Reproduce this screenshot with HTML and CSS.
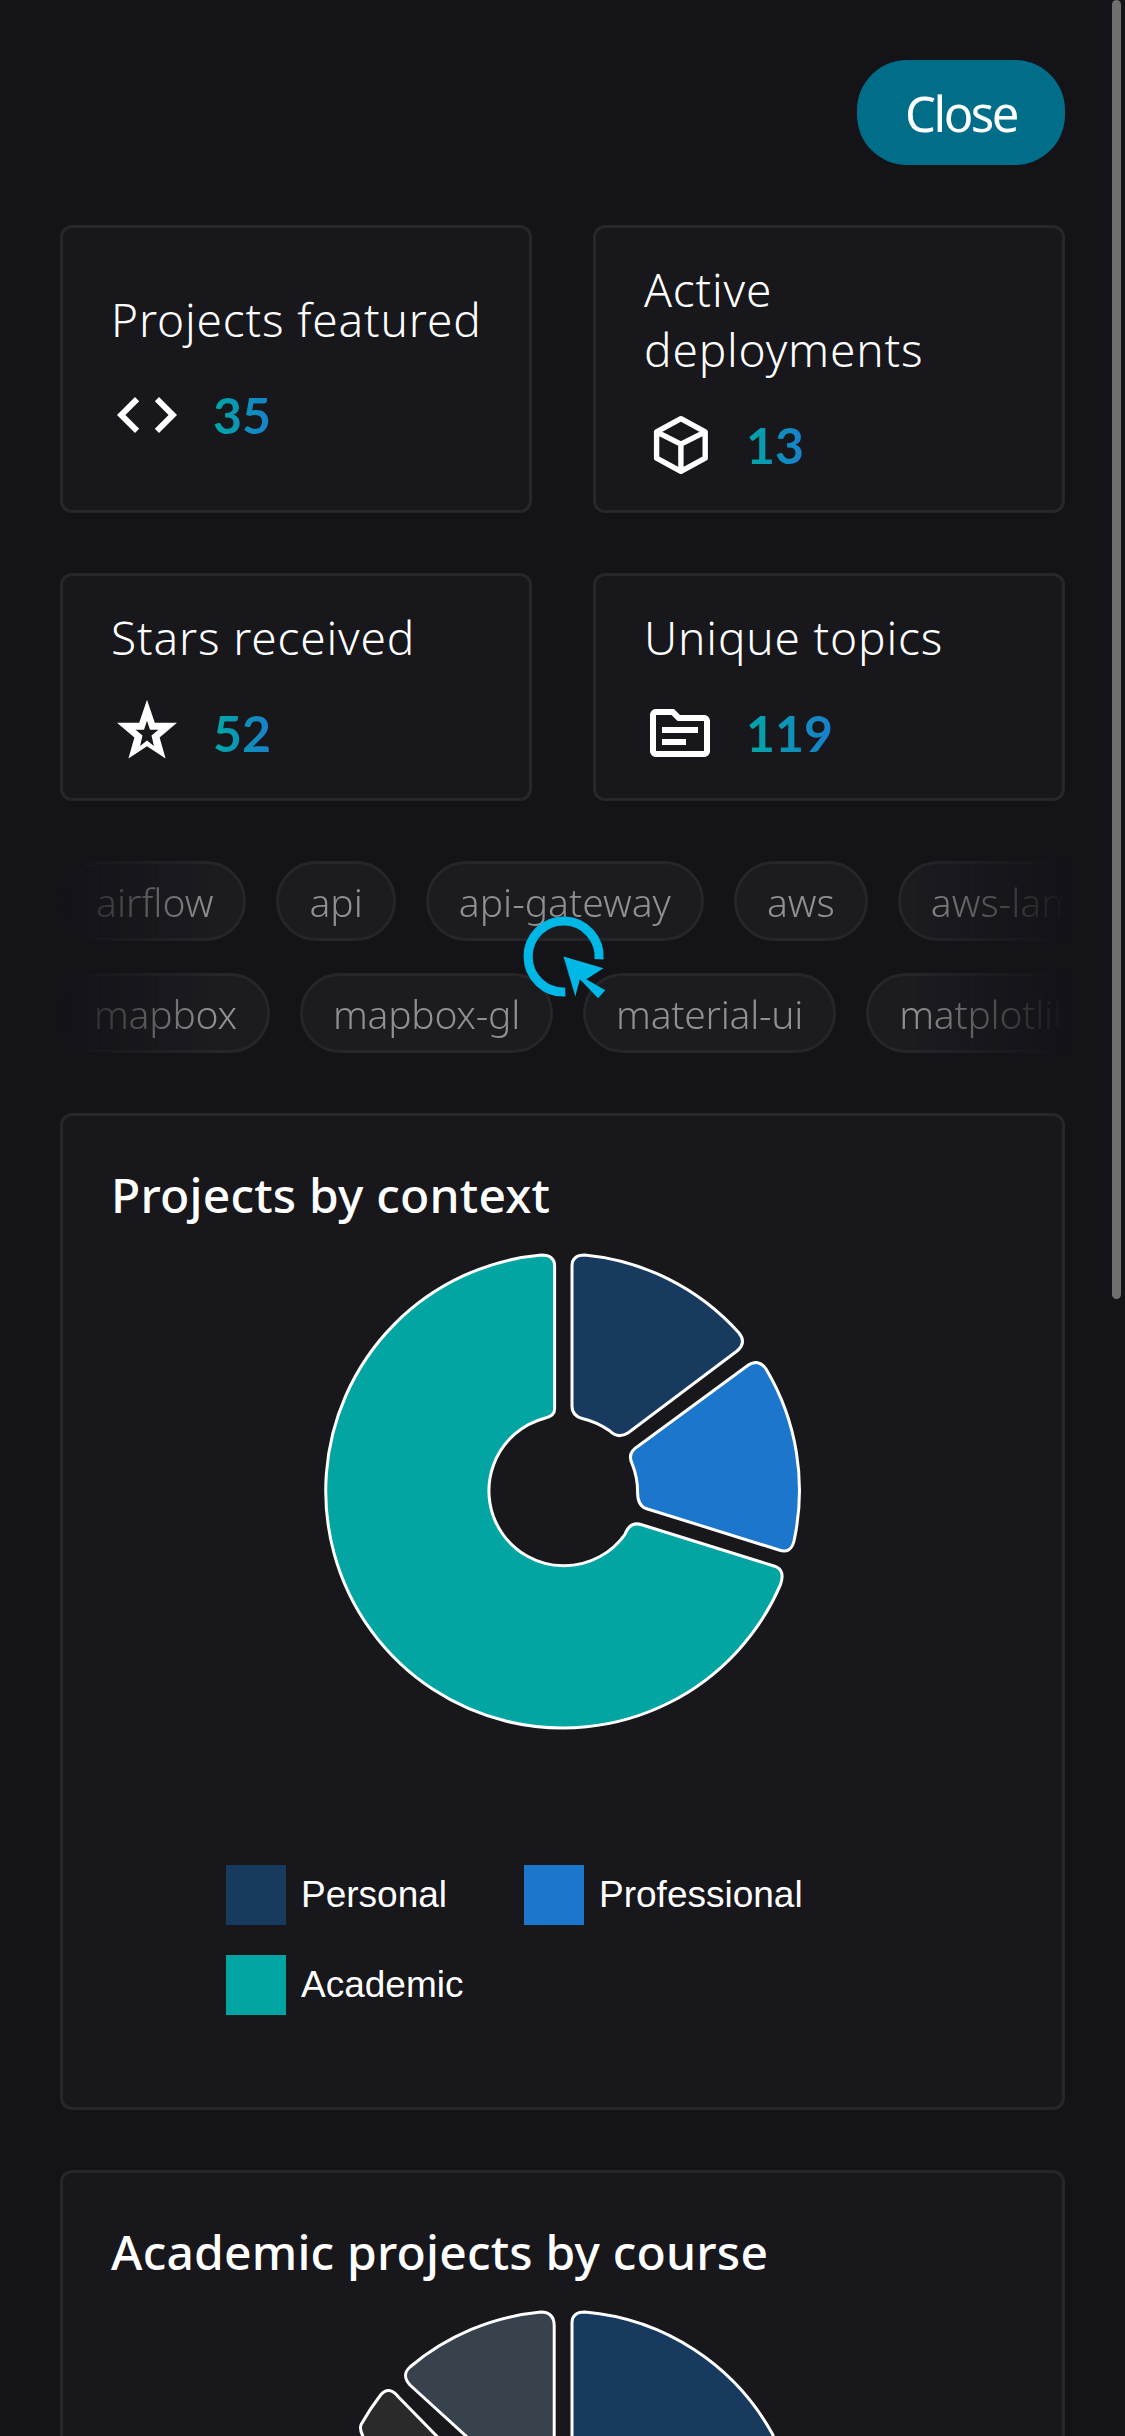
FILE: index.html
```html
<!DOCTYPE html>
<html lang="en">
<head>
    <meta charset="UTF-8">
    <meta name="viewport" content="width=device-width, initial-scale=1.0">
    <title>Portfolio stats</title>
    <link rel="stylesheet" href="styles.css">
</head>
<body>
    <div class="page">
        <div class="top-bar">
            <button class="close">Close</button>
        </div>

        <div class="stats">
            <div class="stat">
                <p class="stat-label">Projects featured</p>
                <div class="stat-row">
                    <svg class="stat-icon" viewBox="0 0 24 24"><path fill="#fff" d="M9.4 16.6 4.8 12l4.6-4.6L8 6l-6 6 6 6 1.4-1.4zm5.2 0 4.6-4.6-4.6-4.6L16 6l6 6-6 6-1.4-1.4z"/></svg>
                    <span class="stat-value">35</span>
                </div>
            </div>
            <div class="stat">
                <p class="stat-label">Active deployments</p>
                <div class="stat-row">
                    <svg class="stat-icon" viewBox="0 0 24 24"><path fill="none" stroke="#fff" stroke-width="1.8" stroke-linejoin="round" d="M12.300 3.200l8.100 4.400v8.800l-8.100 4.400-8.100-4.400V7.600zM4.500 7.800l7.800 3.900 7.800-3.900M12.300 11.700v9"/></svg>
                    <span class="stat-value">13</span>
                </div>
            </div>
            <div class="stat">
                <p class="stat-label">Stars received</p>
                <div class="stat-row">
                    <svg class="stat-icon" viewBox="0 0 24 24"><path fill="#fff" fill-rule="evenodd" transform="translate(0 -1.300)" d="M12 2.200 14.600 9.900H22L16.200 14.800 18.200 21.800 12 17.700 5.800 21.800 7.800 14.800 2 9.900H9.400zM12 9.200 11 12.200H8.200L10.500 14.100 9.700 17.600 12 15.800 14.300 17.600 13.500 14.100 15.800 12.200H13z"/></svg>
                    <span class="stat-value">52</span>
                </div>
            </div>
            <div class="stat">
                <p class="stat-label">Unique topics</p>
                <div class="stat-row">
                    <svg class="stat-icon" viewBox="0 0 24 24"><path fill="#fff" d="M20 6h-8l-2-2H4c-1.100 0-2 .9-2 2v12c0 1.100.9 2 2 2h16c1.100 0 2-.9 2-2V8c0-1.100-.9-2-2-2zm0 12H4V6h5.170l2 2H20v10zM6 10h12v2H6zM6 14h8v2H6z"/></svg>
                    <span class="stat-value">119</span>
                </div>
            </div>
        </div>

        <div class="tags">
            <div class="tag-row">
                <span class="tag">airflow</span>
                <span class="tag">api</span>
                <span class="tag">api-gateway</span>
                <span class="tag">aws</span>
                <span class="tag">aws-lambda</span>
            </div>
            <div class="tag-row shifted">
                <span class="tag">mapbox</span>
                <span class="tag">mapbox-gl</span>
                <span class="tag">material-ui</span>
                <span class="tag">matplotlib</span>
            </div>
        </div>

        <div class="chart-card">
            <h2 class="chart-title">Projects by context</h2>
            <svg class="donut" viewBox="-240 -240 480 480">
                <path class="slice" fill="#183a5f" d="M21.800 -236Q9 -236 9 -225V-85Q9 -75 20 -72.300A75 75 0 0 1 46.900 -60Q55 -51.700 65.300 -58.300L174 -140Q184 -148.300 175.800 -158.300A237 237 0 0 0 21.800 -236Z"/>
                <path class="slice" fill="#1c76cb" d="M75.300 -45L184 -125Q195.600 -133.300 203.200 -121.700A237 237 0 0 1 231 50Q227.700 63.300 216 59L83.700 17.700Q74.600 15 74.600 1.700A75 75 0 0 0 69.300 -26.700Q63.600 -38.300 75.300 -45Z"/>
                <path class="slice" fill="#02a5a1" d="M-21.800 -236Q-8.400 -236 -8.400 -225V-81.700Q-8.400 -75 -18.400 -72.700A75 75 0 1 0 62 43.300Q67 30 78.700 33.700L211 75Q222.600 78.300 217.600 93.300A237 237 0 1 1 -21.800 -236Z"/>
            </svg>
            <ul class="legend">
                <li class="legend-item"><span class="swatch personal"></span>Personal</li>
                <li class="legend-item"><span class="swatch professional"></span>Professional</li>
                <li class="legend-item"><span class="swatch academic"></span>Academic</li>
            </ul>
        </div>

        <div class="chart-card">
            <h2 class="chart-title">Academic projects by course</h2>
            <svg class="donut" viewBox="-240 -240 480 480">
                <path class="slice" fill="#183a5f" d="M21.800 -236Q9 -236 9 -225V-60H210V-113A237 237 0 0 0 21.800 -236Z"/>
                <path class="slice" fill="#37424c" d="M-22 -236Q-8.800 -236 -8.800 -222V-60H-40L-153 -163Q-162 -173 -153 -181A237 237 0 0 1 -22 -236Z"/>
                <path class="slice" fill="#2a2a2a" d="M-100 -85L-164.500 -151Q-174 -163 -182.400 -153A237 237 0 0 0 -201.600 -124Q-205 -118 -196 -105L-170 -85Z"/>
            </svg>
        </div>

        <div class="scroll-thumb"></div>

        <svg class="cursor" viewBox="0 0 100 100">
            <path fill="none" stroke="#00b8e6" stroke-width="10" d="M89 53A39 39 0 1 0 52 89"/>
            <path fill="#00b8e6" d="M50 50L94 63 75 75 96 87 88 96 68 75 63 94z"/>
        </svg>
    </div>
</body>
</html>
```

FILE: styles.css
```css
html,
body {
    margin: 0;
    height: 2436px;
    overflow: hidden;
    background-color: #131318;
}

.page {
    position: relative;
    box-sizing: border-box;
    width: 1125px;
    height: 2436px;
    padding: 60px 60px 0;
    overflow: hidden;
    font-family: "Noto Sans", sans-serif;
    color: #fff;
}

.top-bar {
    display: flex;
    justify-content: flex-end;
}

.close {
    width: 208px;
    height: 105px;
    border: none;
    border-radius: 50px;
    background-color: #006d89;
    color: #fff;
    font-family: "Noto Sans", sans-serif;
    font-size: 49px;
    letter-spacing: -2.5px;
}

.stats {
    display: grid;
    grid-template-columns: 472px 472px;
    gap: 60px 61px;
    margin-top: 60px;
}

.stat {
    display: flex;
    flex-direction: column;
    justify-content: center;
    gap: 36px;
    padding: 31px 30px 35px 48px;
    background-color: #17171c;
    border: 3px solid #27272b;
    border-radius: 12px;
}

.stat-label {
    margin: 0;
    font-size: 46px;
    font-weight: 300;
    letter-spacing: 0.85px;
    line-height: 60px;
}

.stat-row {
    display: flex;
    align-items: center;
    gap: 30px;
    height: 60px;
}

.stat-icon {
    width: 72px;
    height: 72px;
    flex-shrink: 0;
}

.stat-value {
    font-family: "Lato", sans-serif;
    font-size: 50px;
    font-weight: 700;
    background: linear-gradient(to right, #00a7a5, #1a7fcb);
    -webkit-background-clip: text;
    background-clip: text;
    color: transparent;
}

.tags {
    display: flex;
    flex-direction: column;
    gap: 32px;
    margin-top: 60px;
    overflow: hidden;
    -webkit-mask-image: linear-gradient(to right, transparent, #000 15%, #000 85%, transparent);
    mask-image: linear-gradient(to right, transparent, #000 15%, #000 85%, transparent);
}

.tag-row {
    display: flex;
    gap: 30px;
    margin-left: 3px;
    white-space: nowrap;
}

.shifted {
    margin-left: 1px;
    letter-spacing: -0.25px;
}

.tag {
    display: flex;
    align-items: center;
    box-sizing: border-box;
    height: 80px;
    padding: 0 30px;
    flex-shrink: 0;
    background-color: #1b1b20;
    border: 3px solid #26262a;
    border-radius: 40px;
    color: #909090;
    font-size: 39px;
    font-weight: 300;
}

.chart-card {
    box-sizing: border-box;
    height: 997px;
    margin-top: 60px;
    padding: 49px 48px 30px;
    background-color: #17171c;
    border: 3px solid #27272b;
    border-radius: 12px;
}

.chart-title {
    margin: 0;
    font-size: 48px;
    font-weight: 500;
    letter-spacing: 0.2px;
    line-height: 60px;
}

.donut {
    display: block;
    width: 480px;
    height: 480px;
    margin: 26px auto 0;
}

.slice {
    stroke: #fff;
    stroke-width: 3;
}

.legend {
    display: flex;
    flex-wrap: wrap;
    gap: 30px 77px;
    width: 640px;
    margin: 134px 0 0 115px;
    padding: 0;
    list-style: none;
}

.legend-item {
    display: flex;
    align-items: center;
    gap: 15px;
    font-family: "Liberation Sans", sans-serif;
    font-size: 37px;
}

.swatch {
    width: 60px;
    height: 60px;
}

.personal {
    background-color: #183a5f;
}

.professional {
    background-color: #1c76cb;
}

.academic {
    background-color: #02a5a1;
}

.scroll-thumb {
    position: absolute;
    top: 0;
    right: 4px;
    width: 9px;
    height: 1299px;
    border-radius: 5px;
    background-color: #6f6f6f;
}

.cursor {
    position: absolute;
    left: 518px;
    top: 911px;
    width: 91px;
    height: 91px;
    overflow: visible;
}
```
